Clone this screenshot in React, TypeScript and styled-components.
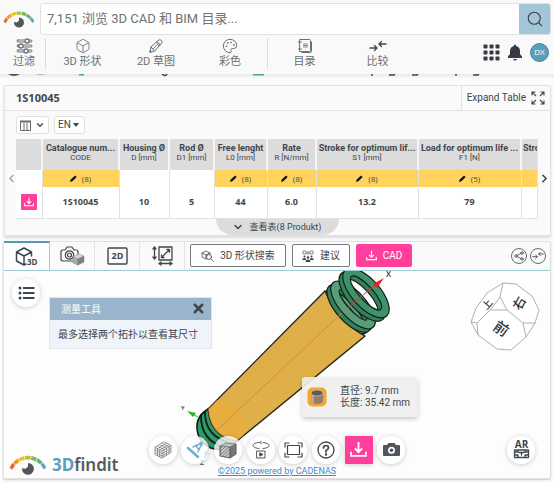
import React from "react";
import styled, { createGlobalStyle, css } from "styled-components";
import { Box, ChevronDown, ChevronLeft, ChevronRight, Palette, Search, X } from "lucide-react";

const ink = "#3f464c";
const pink = "#ff3f9b";
const line = "#e2e2e2";
const blueLine = "#9fcbdb";

const GlobalStyle = createGlobalStyle`
  *, *::before, *::after { box-sizing: border-box; }
  body {
    margin: 0;
    background: #fcfcfc;
    color: ${ink};
    font-family: "Open Sans", "Noto Sans CJK SC", sans-serif;
    font-size: 11px;
    line-height: 16px;
  }
  button, input, select { font: inherit; color: inherit; }
  svg { display: block; flex: none; }
`;

/* ---------- header ---------- */

const Header = styled.header`
  background: #f9f9f9;
  padding: 3px 3px 0;
  height: 74px;
`;
const SearchRow = styled.form`
  display: flex;
  align-items: center;
  gap: 5px;
  margin: 0;
`;
const SearchBox = styled.div`
  display: flex;
  flex: 1;
  height: 32px;
  border: 1px solid #e0e0e0;
  border-radius: 3px;
  background: #fff;
  overflow: hidden;
`;
const SearchInput = styled.input`
  flex: 1;
  min-width: 0;
  border: 0;
  padding: 0 6px;
  outline: 0;
  background: transparent;
  font-family: Roboto, "Noto Sans CJK SC", sans-serif;
  font-size: 13px;
  &::placeholder { color: #717171; opacity: 1; }
`;
const SearchButton = styled.button`
  display: grid;
  place-items: center;
  width: 31px;
  border: 0;
  padding: 0;
  background: #a3c5d8;
`;
const Nav = styled.nav`
  display: flex;
  align-items: flex-start;
  padding-top: 3px;
`;
const NavItem = styled.button<{ $w: number }>`
  display: flex;
  flex-direction: column;
  align-items: center;
  width: ${(p) => p.$w}px;
  border: 0;
  padding: 0;
  background: none;
  color: #6b6f72;
  font-family: Roboto, "Noto Sans CJK SC", sans-serif;
  font-size: 11px;
  line-height: 16px;
  white-space: nowrap;
`;
const NavRule = styled.span`
  width: 1px;
  height: 31px;
  background: #dcdcdc;
`;
const Account = styled.div`
  display: flex;
  align-items: center;
  gap: 7px;
  height: 28px;
  margin-left: auto;
  padding-right: 2px;
`;
const IconButton = styled.button`
  display: grid;
  place-items: center;
  border: 0;
  padding: 0;
  background: none;
`;
const Avatar = styled(IconButton)`
  width: 19px;
  height: 19px;
  border: 1px solid #4b8099;
  border-radius: 50%;
  background: #5b9dbc;
  color: #fff;
  font-size: 8px;
  line-height: 16px;
`;
const ScrollEdge = styled.div`
  height: 11px;
  background: linear-gradient(#e8e8e8, #fcfcfc 5px);
  overflow: hidden;
`;

/* ---------- product table ---------- */

const Panel = styled.section`
  margin: 0 3px 0 4px;
  border: 1px solid ${line};
  border-radius: 2px;
  background: #fafafa;
  box-shadow: 0 2px 3px #0002;
`;
const PanelHead = styled.div`
  display: flex;
  justify-content: space-between;
  height: 25px;
  border-bottom: 1px solid ${line};
`;
const Title = styled.h1`
  margin: 0;
  padding-left: 11px;
  font-size: 11px;
  line-height: 24px;
`;
const ExpandButton = styled.button`
  display: flex;
  align-items: center;
  gap: 5px;
  border: 0;
  border-left: 1px solid ${line};
  padding: 0 5px;
  background: none;
  font-family: Roboto, sans-serif;
  font-size: 10px;
`;
const TableTools = styled.div`
  display: flex;
  gap: 5px;
  padding: 5px 11px;
`;
const ToolButton = styled.button`
  display: flex;
  align-items: center;
  justify-content: space-between;
  width: 33px;
  height: 18px;
  border: 1px solid #e0e0e0;
  border-radius: 3px;
  padding: 0 3px;
  background: #fff;
`;
const SelectWrap = styled.label`
  display: flex;
  align-items: center;
  height: 18px;
  border: 1px solid #e0e0e0;
  border-radius: 3px;
  padding: 0 5px 0 3px;
  background: #fff;
`;
const Select = styled.select`
  appearance: none;
  width: 15px;
  border: 0;
  padding: 0;
  background: none;
  font-family: Roboto, sans-serif;
  font-size: 10px;
`;
const TableRow = styled.div`
  display: grid;
  grid-template-columns: 11px minmax(0, 1fr) 12px;
  align-items: center;
`;
const TableClip = styled.div`
  overflow: hidden;
  border-right: 1px solid ${line};
`;
const Table = styled.table`
  width: 594px;
  table-layout: fixed;
  border-collapse: collapse;
  background: #fff;
  text-align: center;
`;
const Th = styled.th`
  height: 31px;
  border-right: 2px solid #f5f5f5;
  padding: 3px 1px 0;
  background: #dcdcdc;
  vertical-align: top;
`;
const HeadName = styled.span<{ $start?: boolean }>`
  display: block;
  white-space: nowrap;
  font-family: Roboto, sans-serif;
  font-size: 9px;
  line-height: 12px;
  font-weight: 700;
  text-align: ${(p) => (p.$start ? "left" : "center")};
`;
const HeadUnit = styled.span`
  display: block;
  font-family: Roboto, sans-serif;
  font-size: 8px;
  line-height: 8px;
  font-weight: 400;
`;
const cell = css`
  border-right: 1px solid ${line};
  padding: 0;
`;
const FilterCell = styled.td<{ $on: boolean }>`
  ${cell}
  height: 17px;
  background: ${(p) => (p.$on ? "#ffd35c" : "#fff")};
`;
const FilterButton = styled.button`
  display: inline-flex;
  align-items: center;
  gap: 5px;
  height: 15px;
  border: 0;
  padding: 0;
  background: none;
  font-size: 8px;
  line-height: 15px;
  vertical-align: top;
`;
const ValueCell = styled.td`
  ${cell}
  height: 31px;
  border-bottom: 1px solid ${line};
  font-size: 9px;
  font-weight: 700;
`;
const LoadButton = styled(IconButton)`
  width: 16px;
  height: 16px;
  margin: 0 auto;
  border-radius: 1px;
  background: ${pink};
  color: #fff;
`;
const ShowTable = styled.button`
  display: flex;
  align-items: center;
  gap: 6px;
  height: 16px;
  margin: 0 auto;
  border: 0;
  border-radius: 0 0 16px 16px;
  padding: 0 18px 0 16px;
  background: #dcdcdc;
  font-family: Roboto, "Noto Sans CJK SC", sans-serif;
  font-size: 9px;
  white-space: nowrap;
`;
const ShowRow = styled.div`
  display: flex;
`;

/* ---------- viewer ---------- */

const ViewerPanel = styled(Panel)`
  margin: 5px 3px 3px;
  box-shadow: 0 1px 2px #0003;
`;
const Tabs = styled.div`
  display: flex;
  align-items: center;
  height: 29px;
  border-bottom: 1px solid ${blueLine};
`;
const Tab = styled.button<{ $active?: boolean }>`
  display: grid;
  place-items: center;
  width: 45px;
  height: 29px;
  border: 0;
  border-right: 1px solid #e4e4e4;
  padding: 0;
  background: none;
  ${(p) =>
    p.$active &&
    css`
      width: 46px;
      border-top: 2px solid #5598b8;
      border-right-color: ${blueLine};
      background: #fdfdfd;
    `}
`;
const Actions = styled.div`
  display: flex;
  gap: 6px;
  padding-left: 5px;
`;
const Action = styled.button<{ $primary?: boolean; $w: number }>`
  display: flex;
  align-items: center;
  justify-content: center;
  gap: 6px;
  width: ${(p) => p.$w}px;
  height: 23px;
  border: 1px solid ${(p) => (p.$primary ? pink : "#777b7e")};
  border-radius: 2px;
  padding: 0;
  background: ${(p) => (p.$primary ? pink : "#fff")};
  color: ${(p) => (p.$primary ? "#fff" : ink)};
  font-family: Roboto, "Noto Sans CJK SC", sans-serif;
  font-size: 10px;
  white-space: nowrap;
`;
const Corner = styled.div`
  display: flex;
  gap: 3px;
  margin-left: auto;
  padding-right: 4px;
`;
const CornerButton = styled(IconButton)`
  width: 16px;
  height: 16px;
  border: 1px solid #666b70;
  border-radius: 50%;
`;
const Viewer = styled.div`
  position: relative;
  min-height: 207px;
  background: #fdfdfd;
  overflow: hidden;
`;
const Scene = styled.svg`
  width: 100%;
  height: 207px;
`;
const Round = styled(IconButton)`
  width: 28px;
  height: 28px;
  border-radius: 50%;
  background: #ffffffc8;
  box-shadow: 0 1px 5px #0003;
`;
const MenuButton = styled(Round)`
  position: absolute;
  left: 8px;
  top: 8px;
`;
const ArButton = styled(Round)`
  position: absolute;
  right: 15px;
  bottom: 14px;
`;
const Dialog = styled.div`
  position: absolute;
  left: 45px;
  top: 26px;
  width: 163px;
  border: 1px solid #e1e6ee;
  background: #eff3fa;
`;
const DialogHead = styled.div`
  display: flex;
  align-items: center;
  justify-content: space-between;
  height: 22px;
  padding: 0 5px 0 11px;
  background: #9ab5cb;
  color: #fff;
  font-size: 10px;
`;
const DialogClose = styled(IconButton)`
  color: ${ink};
`;
const DialogText = styled.p`
  margin: 0;
  padding: 6px 8px;
  font-size: 10px;
  white-space: nowrap;
`;
const Tooltip = styled.div`
  position: absolute;
  left: 298px;
  top: 106px;
  display: flex;
  align-items: center;
  gap: 13px;
  height: 40px;
  padding: 0 8px 0 5px;
  border-radius: 3px;
  background: #eeeeeee8;
  box-shadow: 0 2px 4px #0003;
  font-family: Roboto, "Noto Sans CJK SC", sans-serif;
  font-size: 10px;
  line-height: 12px;
  white-space: nowrap;
`;
const BottomBar = styled.div`
  position: absolute;
  left: 0;
  right: 0;
  bottom: 0;
  display: flex;
  flex-direction: column;
  align-items: center;
`;
const ViewTools = styled.div`
  display: flex;
  justify-content: space-between;
  width: 257px;
`;
const DownloadButton = styled(Round)`
  border-radius: 1px;
  background: ${pink};
  color: #fff;
`;
const Credit = styled.a`
  color: #4288d2;
  font-family: Roboto, sans-serif;
  font-size: 9px;
  line-height: 14px;
  text-decoration: underline;
`;
const Brand = styled.div`
  position: absolute;
  left: 5px;
  bottom: 2px;
  display: flex;
  align-items: center;
  gap: 5px;
  font-family: "Noto Sans", sans-serif;
  font-size: 17px;
  line-height: 20px;
  font-weight: 600;
  color: #565b60;
`;
const BrandBlue = styled.span`
  color: #5a9fc0;
  font-weight: 700;
`;

/* ---------- drawings ---------- */

const rainbow = ["#ec6228", "#f19a19", "#ecc717", "#b7c236", "#7fb95a", "#62b184", "#60a5bd"];

function EyeLogo({ width = 32 }: { width?: number }) {
  const at = (deg: number, outer: boolean) => {
    const a = (deg * Math.PI) / 180;
    const r = outer ? 17 : 14.5;
    const cy = outer ? 18.5 : 19.2;
    return `${16 - r * Math.cos(a)},${cy - r * Math.sin(a)}`;
  };
  return (
    <svg width={width} height={(width * 18) / 32} viewBox="0 0 32 18" aria-hidden="true">
      {rainbow.map((c, i) => {
        const s = 24 + i * 19;
        const e = s + 17;
        return <polygon key={c} fill={c} points={[at(s, true), at(s + 8, true), at(e, true), at(e, false), at(s + 8, false), at(s, false)].join(" ")} />;
      })}
      <path d="M16 7.500a5 5 0 1 1-5 4.500l3 .5 2-2Z" fill="#50565c" />
    </svg>
  );
}

const stroke = { fill: "none", stroke: "currentColor", strokeWidth: 1, strokeLinecap: "round", strokeLinejoin: "round" } as const;

const SlidersIcon = () => (
  <svg width="17" height="16" viewBox="0 0 17 16" {...stroke}>
    {[[3, 11], [8, 5], [13, 10]].map(([y, x]) => (
      <g key={y}>
        <rect x="1" y={y - 1} width="15" height="2" rx="1" />
        <circle cx={x} cy={y} r="2" fill="#f9f9f9" strokeWidth="1.3" />
      </g>
    ))}
  </svg>
);
const PencilIcon = () => (
  <svg width="16" height="16" viewBox="0 0 16 16" {...stroke}>
    <path d="M2 14 3 9 10 2.500Q12 .8 13.500 2.500T13 6L6.500 13ZM3 9l3.500 4M9 3.500 12 7" />
    <path d="M5 11 11 5M2 14l1.500-.4-1-1ZM8 4.500 11 8" strokeWidth=".8" />
  </svg>
);
const BookIcon = () => (
  <svg width="16" height="16" viewBox="0 0 16 16" {...stroke}>
    <path d="M3 1.500h9.500a1 1 0 0 1 1 1v10a1 1 0 0 1-1 1H3ZM1.500 4h3M1.500 11h3" />
    <path d="M5 14.500h8.500a1 1 0 0 0 1-1V4" />
    <path d="M6.500 6h4M6.500 7.500h4M6.500 9h4" strokeWidth=".8" />
  </svg>
);
const CompareIcon = ({ size = 18 }: { size?: number }) => (
  <svg width={size} height={(size * 16) / 18} viewBox="0 0 18 16" {...stroke} strokeWidth={1.3} color={ink}>
    <path d="M1 10h7M5.500 7.500 8 10l-2.500 2.500M17 6h-7M12.500 3.500 10 6l2.500 2.500" />
  </svg>
);
const GridIcon = () => (
  <svg width="17" height="17" viewBox="0 0 17 17" fill="#353a40">
    {[0, 6, 12].map((x) => [0, 6, 12].map((y) => <rect key={`${x}-${y}`} x={x + 0.5} y={y + 0.5} width="4" height="4" rx=".8" />))}
  </svg>
);
const BellIcon = () => (
  <svg width="16" height="17" viewBox="0 0 16 17" fill="#353a40">
    <path d="M7 1q1-1 2 0v1q4 1 4 5v3l2 2.500V14H1v-1.500L3 10V7q0-4 4-5ZM6 15h4q-.5 1.500-2 1.500T6 15" />
  </svg>
);
const DownloadIcon = ({ size = 14 }: { size?: number }) => (
  <svg width={size} height={size} viewBox="0 0 16 16" fill="none" stroke="currentColor" strokeWidth="1.700">
    <path d="M8 1v9M4.500 7 8 10.500 11.500 7M1 10v4h14v-4" />
  </svg>
);
const ExpandIcon = () => (
  <svg width="14" height="14" viewBox="0 0 14 14" fill="none" stroke="currentColor" strokeWidth="1.100">
    <path d="M1 4.500V1h3.500M1 1l4 4M9.500 1H13v3.500M13 1 9 5M1 9.500V13h3.500M1 13l4-4M13 9.500V13H9.500M13 13 9 9" />
  </svg>
);
const ColumnsIcon = () => (
  <svg width="11" height="11" viewBox="0 0 11 11" fill="none" stroke="#676c70">
    <path d="M.5 1v9.500h10V1M4 3v7M7 3v7" />
    <path d="M0 1.500h11" strokeWidth="2" />
  </svg>
);
const EditIcon = () => (
  <svg width="7" height="7" viewBox="0 0 7 7">
    <path d="M0 7 .8 4.600 5 .5 6.700 2 2.400 6.300Z" fill="#111" />
  </svg>
);
const Cube3DIcon = () => (
  <svg width="24" height="20" viewBox="0 0 24 20" {...stroke} strokeWidth={1.5}>
    <path d="M11 17 9 18 1.500 14V5L9 1l7.500 4v4M1.500 5 9 9l7.500-4M9 9v9" />
    <text x="12" y="18" fontSize="8" fontWeight="700" fill="currentColor" stroke="none">3D</text>
  </svg>
);
const PhotoCubeIcon = () => (
  <svg width="25" height="20" viewBox="0 0 25 20" {...stroke} strokeWidth={1.2}>
    <path d="M13 15H3q-2 0-2-2V6q0-2 2-2h2l2-3h5l2 3h2q2 0 2 2v2" />
    <circle cx="9.500" cy="9" r="4.200" />
    <circle cx="9.500" cy="9" r="2" />
    <g stroke="#777" strokeWidth=".4">
      <path d="m13 11 6-3 5 2-6 3Z" fill="#d6d6d6" />
      <path d="m13 11 5 2v6l-5-2Z" fill="#aaa" />
      <path d="m18 13 6-3v6l-6 3Z" fill="#808080" />
    </g>
  </svg>
);
const Flat2DIcon = () => (
  <svg width="21" height="18" viewBox="0 0 21 18" {...stroke} strokeWidth={1.400}>
    <rect x="1" y="1" width="19" height="16" rx="1" />
    <text x="10.500" y="12" fontSize="9" fontWeight="700" textAnchor="middle" fill="currentColor" stroke="none">2D</text>
  </svg>
);
const DimensionIcon = () => (
  <svg width="21" height="20" viewBox="0 0 21 20" {...stroke} strokeWidth={1.300}>
    <path d="M7 1h13v13H7ZM9.500 11.500l8-8M9.500 9v2.500H12M15 3.500h2.500V6M2.500 1v12M1 3l1.500-2L4 3M1 11l1.500 2L4 11M7 17.500h13M9 16l-2 1.500L9 19M18 16l2 1.500-2 1.500" />
  </svg>
);
const ShapeSearchIcon = () => (
  <svg width="13" height="12" viewBox="0 0 13 12" {...stroke} strokeWidth={0.8}>
    <path d="M5 9 1 7V3l4-2 4 2v1M1 3l4 2 4-2M5 5v4" />
    <circle cx="8" cy="7" r="2.500" />
    <path d="m10 9 2.500 2.500" />
  </svg>
);
const PeopleIcon = () => (
  <svg width="12" height="12" viewBox="0 0 12 12" fill="currentColor">
    <path d="M1 1h3v3H1ZM5 2h2v2H5ZM8 1h3v3H8Z" fill="none" stroke="currentColor" strokeWidth=".6" />
    <circle cx="2.500" cy="6.500" r="1" /><circle cx="9.500" cy="6.500" r="1" /><circle cx="6" cy="7.500" r="1.300" />
    <path d="M.5 10V8.500q2-1 3.500 0V10ZM8 10V8.500q2-1 3.500 0V10ZM3.700 12v-1.500q2.300-2 4.600 0V12Z" />
  </svg>
);
const ShareIcon = () => (
  <svg width="10" height="10" viewBox="0 0 10 10" {...stroke} strokeWidth={0.8}>
    <path d="m3 4.500 4-2M3 5.500l4 2" />
    <circle cx="2" cy="5" r="1.300" /><circle cx="8" cy="2" r="1.300" /><circle cx="8" cy="8" r="1.300" />
  </svg>
);
const ListIcon = () => (
  <svg width="17" height="14" viewBox="0 0 17 14">
    {[2, 7, 12].map((y) => (
      <g key={y}><circle cx="2" cy={y} r="1.500" fill={ink} /><path d={`M5 ${y}h11.500`} stroke={ink} strokeWidth="2" /></g>
    ))}
  </svg>
);
const MeshIcon = () => (
  <svg width="18" height="18" viewBox="0 0 18 18" {...stroke} strokeWidth={0.5}>
    <path d="m10 1 7 3.500v7L8 17l-7-3.500v-7ZM1 6.500 8 10l9-5.500M8 10v7M1 9l7 3.500L17 7M1 11.500 8 15l9-5.500M3.500 8v6.700M5.700 9v6.700M10 9v6.700M12.500 7.500v6.700M15 6v6.700M3.500 5.200l7 3.300M5.700 3.700l7 3.500M8 2.300l7 3.500M3.500 7.700l9-5.500M5.700 9 15 3.500" />
  </svg>
);
const MeasureIcon = () => (
  <svg width="18" height="18" viewBox="0 0 18 18" {...stroke} stroke="#6faecc">
    <path d="m2 7 10 9" strokeWidth="2.500" />
    <path d="M7 6 16 2 12 11M10 4.500q1 3 3.500 4M14 1.500l2 .5v2.500" strokeWidth="1.400" />
  </svg>
);
const SectionIcon = () => (
  <svg width="18" height="18" viewBox="0 0 18 18" stroke="#555" strokeWidth=".6">
    <path d="m1 5 6-3 10 1v10l-6 4-10-2Z" fill="#c4c4c4" />
    <path d="m11 6 6-3v10l-6 4Z" fill="#777" />
    <path d="m1 5 10 1v11L1 15ZM1 8l3-3M1 11l6-6M1 14l9-8M3 15.400 11 8M6 16l5-5M9 16.600l2-2" fill="none" />
  </svg>
);
const AnimateIcon = () => (
  <svg width="18" height="18" viewBox="0 0 18 18" {...stroke} strokeWidth={0.9}>
    <path d="M7 7.500C2.500 7.200 1 5.500 1 4.500 1 3 3 1.800 6.500 1.500M11 1.500q6 .7 6 3 0 2.600-6 3M9.500.3l-2 1.200 2 1.200M5 10h8v7H5Z" />
    <path d="m8 12 3 1.500L8 15Z" fill="currentColor" />
  </svg>
);
const FitIcon = () => (
  <svg width="19" height="16" viewBox="0 0 19 16" {...stroke} strokeWidth={1.200}>
    <path d="M1 5V1h4M14 1h4v4M18 11v4h-4M5 15H1v-4" />
    <rect x="3.500" y="3.500" width="12" height="9" />
  </svg>
);
const HelpIcon = () => (
  <svg width="18" height="18" viewBox="0 0 18 18" {...stroke} strokeWidth={1.300}>
    <circle cx="9" cy="9" r="8" />
    <path d="M6.500 7Q6.500 4.500 9 4.500T11.500 7Q11.500 8 9 9.500V11" strokeWidth="1.700" />
    <circle cx="9" cy="13.500" r=".6" fill="currentColor" />
  </svg>
);
const CameraIcon = () => (
  <svg width="17" height="15" viewBox="0 0 17 15">
    <path d="M1 3h3l1.500-2h6L13 3h3q1 0 1 1v9q0 1-1 1H1q-1 0-1-1V4q0-1 1-1" fill="#50565c" />
    <circle cx="8.500" cy="8.200" r="3.500" fill="#fff" /><circle cx="8.500" cy="8.200" r="1.800" fill="#50565c" />
  </svg>
);
const ArIcon = () => (
  <svg width="17" height="19" viewBox="0 0 17 19" {...stroke} strokeWidth={1.300}>
    <text x="8.500" y="8" fontSize="10" fontWeight="700" textAnchor="middle" fill="currentColor" stroke="none">AR</text>
    <path d="M1.500 10h14v7.500h-14ZM5 10v2H2M12 10v2h3M5 17v-2H2M12 17v-2h3M6 12.500h5M8.500 12.500v2.500" />
  </svg>
);
const CylinderIcon = () => (
  <svg width="20" height="20" viewBox="0 0 20 20">
    <rect x=".5" y=".5" width="19" height="19" rx="5" fill="#f3a72e" />
    <path d="M4 6v8q0 3 6 3t6-3V6" fill="#8f806b" />
    <path d="M4 7v7q0 2 3 2.700V8Z" fill="#b7a78f" />
    <ellipse cx="10" cy="6" rx="6" ry="3" fill="#625b51" stroke="#d9cdb8" strokeWidth=".7" />
  </svg>
);

/* Ring of the spring: coil side, top face and open centre. */
function Coil({ x, y, rx, ry, hx, hy, fill }: { x: number; y: number; rx: number; ry: number; hx: number; hy: number; fill: string }) {
  const ring = `M${-rx} 0a${rx} ${ry} 0 1 0 ${rx * 2} 0a${rx} ${ry} 0 1 0 ${-rx * 2} 0M${-hx} 0a${hx} ${hy} 0 1 1 ${hx * 2} 0a${hx} ${hy} 0 1 1 ${-hx * 2} 0`;
  return (
    <g transform={`translate(${x} ${y}) rotate(48)`} stroke="#101e17" strokeWidth="1.200" fillRule="evenodd">
      <path d={ring} transform="translate(0 5)" fill="#34805c" />
      <path d={ring} fill={fill} />
    </g>
  );
}

function SpringScene() {
  return (
    <Scene viewBox="4 271 546 207" preserveAspectRatio="xMinYMin meet" role="img" aria-label="1S10045">
      <defs>
        <linearGradient id="body" x1="0" y1="0" x2="1" y2="1">
          <stop offset="0" stopColor="#d9a844" /><stop offset=".5" stopColor="#dfb049" /><stop offset="1" stopColor="#e3ad46" />
        </linearGradient>
        <clipPath id="bodyClip"><path d="M325 291Q338 322 365 336L237 441Q210 437 208 409Z" /></clipPath>
      </defs>
      <path d="M208 409Q196 416 197 429T211 448Q225 453 237 441L224 415Z" fill="#2f9a6a" stroke="#101e17" strokeWidth="1.500" />
      <path d="M205 411Q204 437 233 444M201 414Q200 441 226 448" fill="none" stroke="#101e17" strokeWidth="1.800" />
      <Coil x={347} y={311} rx={29} ry={11} hx={20} hy={4} fill="#5f9c78" />
      <path d="M325 291Q338 322 365 336L237 441Q210 437 208 409Z" fill="url(#body)" stroke="#24231d" strokeWidth="1.300" />
      <circle cx="217" cy="428" r="28" fill="#f4aa35" opacity=".45" clipPath="url(#bodyClip)" />
      <Coil x={353} y={305} rx={30} ry={13} hx={20} hy={5} fill="#5a9e78" />
      <path d="M217 430 342 313" stroke="#d98a38" />
      <Coil x={366} y={293} rx={31} ry={14} hx={22} hy={7} fill="#40926b" />
      <path d="m348 308 28-24" stroke="#e23a2e" />
      <path d="m373 284 11-6-7 10Z" fill="#f11e1e" />
      <path d="m199 418-6-4" stroke="#28b828" /><path d="m187 411 9 2-3 4Z" fill="#23b923" />
      <path d="m209 447-2 6" stroke="#6c70ef" strokeWidth="1.500" /><path d="m204 459 1-8 4 2Z" fill="#5a5ef4" />
      <g fontSize="8" fontWeight="600" fill="#333"><text x="386" y="277">X</text><text x="181" y="410" fontSize="6">Y</text><text x="200" y="465" fontSize="7" fill="#555">Z</text></g>
      <g stroke="#9b9b9b" strokeWidth=".8" fill="#fff" strokeLinejoin="round">
        <path d="m503 283 13 1 16 12 7 14-4 13-9 14-15 13-14-1-19-14-7-13 5-14 11-15Z" />
        <path d="m503 283-3 14-9 12-14 14 1 12M471 322l6 1M500 297l7 13h-16M507 310l16 13h12M523 323l3 14" fill="none" />
      </g>
      <g fill="#333" fontSize="15" fontWeight="500" textAnchor="middle" fontFamily="Noto Sans CJK SC, sans-serif">
        <text transform="translate(501 329) rotate(35)" y="5">前</text>
        <text transform="translate(519 303) rotate(-60)" y="5" fontSize="13">右</text>
        <text transform="translate(487 304) rotate(-50)" y="4" fontSize="10">上</text>
      </g>
    </Scene>
  );
}

/* ---------- data ---------- */

const columns = [
  { name: "Catalogue num...", unit: "CODE", width: 77, filter: "(8)", value: "1S10045" },
  { name: "Housing Ø", unit: "D [mm]", width: 50, value: "10" },
  { name: "Rod Ø", unit: "D1 [mm]", width: 45, value: "5" },
  { name: "Free lenght", unit: "L0 [mm]", width: 53, filter: "(8)", value: "44" },
  { name: "Rate", unit: "R [N/mm]", width: 49, filter: "(8)", value: "6.0" },
  { name: "Stroke for optimum lif...", unit: "S1 [mm]", width: 102, filter: "(8)", value: "13.2" },
  { name: "Load for optimum life ...", unit: "F1 [N]", width: 103, filter: "(5)", value: "79" },
  { name: "Stroke", unit: "", width: 89, filter: " ", value: "" },
];

export default function App() {
  return (
    <>
      <GlobalStyle />
      <Header>
        <SearchRow onSubmit={(e) => e.preventDefault()}>
          <EyeLogo />
          <SearchBox>
            <SearchInput aria-label="搜索" placeholder="7,151 浏览 3D CAD 和 BIM 目录..." />
            <SearchButton aria-label="搜索"><Search size={18} strokeWidth={1.5} /></SearchButton>
          </SearchBox>
        </SearchRow>
        <Nav>
          <NavItem $w={42}><SlidersIcon />过滤</NavItem>
          <NavRule />
          <NavItem $w={73}><Box size={16} strokeWidth={1.3} />3D 形状</NavItem>
          <NavItem $w={74}><PencilIcon />2D 草图</NavItem>
          <NavItem $w={74}><Palette size={16} strokeWidth={1.5} />彩色</NavItem>
          <NavRule />
          <NavItem $w={73}><BookIcon />目录</NavItem>
          <NavItem $w={73}><CompareIcon />比较</NavItem>
          <Account>
            <IconButton aria-label="应用"><GridIcon /></IconButton>
            <IconButton aria-label="通知"><BellIcon /></IconButton>
            <Avatar>DX</Avatar>
          </Account>
        </Nav>
      </Header>
      <ScrollEdge>
        <svg width="554" height="5" viewBox="0 0 554 5" aria-hidden="true">
          <path d="M8 0h12q-6 4-12 0" fill="#50565c" />
          <path d="M37 0h7" stroke="#bbb" strokeWidth="2" />
          <path d="M79 0h5M253 0h11" stroke="#4aa77c" strokeWidth="3" />
          <path d="M162 0q3 3 5 0M372 0v2M389 1h5l1-1M412 1h5l1-1M456 0v2M473 1h5l1-1" fill="none" stroke="#444" strokeWidth="1.500" />
        </svg>
      </ScrollEdge>

      <Panel>
        <PanelHead>
          <Title>1S10045</Title>
          <ExpandButton>Expand Table <ExpandIcon /></ExpandButton>
        </PanelHead>
        <TableTools>
          <ToolButton aria-label="列"><ColumnsIcon /><ChevronDown size={10} strokeWidth={3} /></ToolButton>
          <SelectWrap>
            <Select aria-label="语言" defaultValue="EN"><option>EN</option><option>DE</option></Select>
            <svg width="6" height="4" viewBox="0 0 6 4"><path d="M0 0h6L3 4Z" fill={ink} /></svg>
          </SelectWrap>
        </TableTools>
        <TableRow>
          <IconButton aria-label="向左"><ChevronLeft size={13} strokeWidth={2} color="#999" /></IconButton>
          <TableClip>
            <Table>
              <colgroup>
                <col width={26} />
                {columns.map((c) => <col key={c.name} width={c.width} />)}
              </colgroup>
              <thead>
                <tr>
                  <Th aria-label="下载" />
                  {columns.map((c, i) => (
                    <Th key={c.name} scope="col">
                      <HeadName $start={i === columns.length - 1}>{c.name}</HeadName>
                      <HeadUnit>{c.unit}</HeadUnit>
                    </Th>
                  ))}
                </tr>
              </thead>
              <tbody>
                <tr>
                  <FilterCell $on={false} />
                  {columns.map((c) => (
                    <FilterCell key={c.name} $on={!!c.filter}>
                      {c.filter?.trim() && <FilterButton><EditIcon />{c.filter}</FilterButton>}
                    </FilterCell>
                  ))}
                </tr>
                <tr>
                  <ValueCell><LoadButton aria-label="下载"><DownloadIcon size={10} /></LoadButton></ValueCell>
                  {columns.map((c) => <ValueCell key={c.name}>{c.value}</ValueCell>)}
                </tr>
              </tbody>
            </Table>
          </TableClip>
          <IconButton aria-label="向右"><ChevronRight size={13} strokeWidth={3} /></IconButton>
        </TableRow>
        <ShowRow>
          <ShowTable><ChevronDown size={12} strokeWidth={3} />查看表(8 Produkt)</ShowTable>
        </ShowRow>
      </Panel>

      <ViewerPanel>
        <Tabs>
          <Tab $active aria-label="3D"><Cube3DIcon /></Tab>
          <Tab aria-label="照片"><PhotoCubeIcon /></Tab>
          <Tab aria-label="2D"><Flat2DIcon /></Tab>
          <Tab aria-label="尺寸"><DimensionIcon /></Tab>
          <Actions>
            <Action $w={96}><ShapeSearchIcon />3D 形状搜索</Action>
            <Action $w={58}><PeopleIcon />建议</Action>
            <Action $w={56} $primary><DownloadIcon size={11} />CAD</Action>
          </Actions>
          <Corner>
            <CornerButton aria-label="分享"><ShareIcon /></CornerButton>
            <CornerButton aria-label="比较"><CompareIcon size={12} /></CornerButton>
          </Corner>
        </Tabs>
        <Viewer>
          <SpringScene />
          <MenuButton aria-label="菜单"><ListIcon /></MenuButton>
          <Dialog role="dialog" aria-label="测量工具">
            <DialogHead>
              测量工具
              <DialogClose aria-label="关闭"><X size={15} strokeWidth={4} /></DialogClose>
            </DialogHead>
            <DialogText>最多选择两个拓扑以查看其尺寸</DialogText>
          </Dialog>
          <Tooltip role="tooltip">
            <CylinderIcon />
            <div>直径: 9.7 mm<br />长度: 35.42 mm</div>
          </Tooltip>
          <Brand><EyeLogo width={38} /><span><BrandBlue>3D</BrandBlue>findit</span></Brand>
          <BottomBar>
            <ViewTools>
              <Round aria-label="网格"><MeshIcon /></Round>
              <Round aria-label="测量"><MeasureIcon /></Round>
              <Round aria-label="剖面"><SectionIcon /></Round>
              <Round aria-label="动画"><AnimateIcon /></Round>
              <Round aria-label="适应窗口"><FitIcon /></Round>
              <Round aria-label="帮助"><HelpIcon /></Round>
              <DownloadButton aria-label="下载"><DownloadIcon size={17} /></DownloadButton>
              <Round aria-label="截图"><CameraIcon /></Round>
            </ViewTools>
            <Credit href="#cadenas">©2025 powered by CADENAS</Credit>
          </BottomBar>
          <ArButton aria-label="AR"><ArIcon /></ArButton>
        </Viewer>
      </ViewerPanel>
    </>
  );
}
